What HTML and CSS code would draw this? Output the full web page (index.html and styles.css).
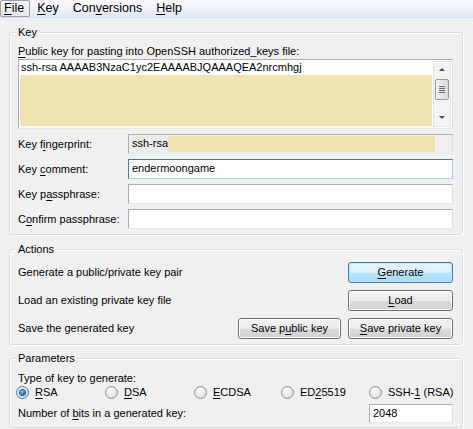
FILE: index.html
```html
<!DOCTYPE html>
<html lang="en">
<head>
    <meta charset="UTF-8">
    <title>PuTTY Key Generator</title>
    <link rel="stylesheet" href="styles.css">
</head>
<body>
    <div class="menubar">
        <span class="menu-item active"><u>F</u>ile</span>
        <span class="menu-item"><u>K</u>ey</span>
        <span class="menu-item">Con<u>v</u>ersions</span>
        <span class="menu-item"><u>H</u>elp</span>
    </div>

    <div class="content">
        <!-- Key -->
        <section class="group group-key">
            <span class="group-title">Key</span>
            <div class="field-label"><u>P</u>ublic key for pasting into OpenSSH authorized_keys file:</div>
            <div class="pubkey">
                <div class="pubkey-text">
                    <div class="pubkey-line">ssh-rsa AAAAB3NzaC1yc2EAAAABJQAAAQEA2nrcmhgj</div>
                    <div class="pubkey-fill"></div>
                </div>
                <div class="scrollbar">
                    <span class="arrow up"></span>
                    <span class="thumb"><i></i><i></i><i></i><i></i></span>
                    <span class="arrow down"></span>
                </div>
            </div>
            <div class="key-rows">
                <label>Key f<u>i</u>ngerprint:</label>
                <div class="input fingerprint"><span class="fp-text">ssh-rsa</span><span class="fp-fill"></span></div>
                <label>Key <u>c</u>omment:</label>
                <div class="input focused">endermoongame</div>
                <label>Key p<u>a</u>ssphrase:</label>
                <div class="input"></div>
                <label>C<u>o</u>nfirm passphrase:</label>
                <div class="input"></div>
            </div>
        </section>

        <!-- Actions -->
        <section class="group group-actions">
            <span class="group-title">Actions</span>
            <div class="action-row">
                <span class="action-text">Generate a public/private key pair</span>
                <button class="btn default"><u>G</u>enerate</button>
            </div>
            <div class="action-row">
                <span class="action-text">Load an existing private key file</span>
                <button class="btn"><u>L</u>oad</button>
            </div>
            <div class="action-row">
                <span class="action-text">Save the generated key</span>
                <button class="btn btn-narrow">Save p<u>u</u>blic key</button>
                <button class="btn"><u>S</u>ave private key</button>
            </div>
        </section>

        <!-- Parameters -->
        <section class="group group-params">
            <span class="group-title">Parameters</span>
            <div class="param-text">Type of key to generate:</div>
            <div class="radios">
                <span class="radio checked"><span class="dot"></span><span><u>R</u>SA</span></span>
                <span class="radio"><span class="dot"></span><span><u>D</u>SA</span></span>
                <span class="radio"><span class="dot"></span><span><u>E</u>CDSA</span></span>
                <span class="radio"><span class="dot"></span><span>ED<u>2</u>5519</span></span>
                <span class="radio"><span class="dot"></span><span>SSH-<u>1</u> (RSA)</span></span>
            </div>
            <div class="bits-row">
                <span>Number of <u>b</u>its in a generated key:</span>
                <div class="input bits">2048</div>
            </div>
        </section>
    </div>
</body>
</html>
```

FILE: styles.css
```css
body {
    margin: 0;
    background: #f0f0f0;
    font-family: 'Liberation Sans', Arial, sans-serif;
    font-size: 11px;
    line-height: 13px;
    color: #000;
}

u {
    text-decoration-thickness: 1px;
    text-underline-offset: 2px;
}

/* Menu bar */
.menubar {
    height: 17px;
    display: flex;
    align-items: stretch;
    background: linear-gradient(#fbfcfe, #eef2f9 55%, #dde6f3);
    border-bottom: 1px solid #d8e0ec;
    font-size: 12.5px;
    line-height: 15px;
}

.menu-item {
    padding: 0 6px;
    border: 1px solid transparent;
}

.menu-item.active {
    padding: 0 5px 0 3px;
    border-color: #9aa0a6;
    border-radius: 2px;
    background: linear-gradient(#f6f6f6, #e4e6e9);
}

.content {
    padding: 0 10px 0 9px;
}

/* Group boxes */
.group {
    position: relative;
    border: 1px solid #d5dfe5;
    border-radius: 3px;
    box-shadow: inset 1px 1px 0 #fff, 1px 1px 0 #fff;
    padding: 0 9px 0 8px;
}

.group-title {
    position: absolute;
    top: -7px;
    left: 6px;
    padding: 0 2px;
    background: #f0f0f0;
}

.group-key {
    margin-top: 14px;
    padding-top: 12px;
    padding-bottom: 5px;
}

.field-label {
    height: 13px;
    margin-bottom: 1px;
}

/* Public key box */
.pubkey {
    display: flex;
    height: 68px;
    border: 1px solid #abadb3;
    border-right-color: #dbdfe6;
    border-bottom-color: #e3e9ef;
    background: #fff;
}

.pubkey-text {
    flex: 1;
    display: flex;
    flex-direction: column;
    padding: 1px 1px 2px 1px;
}

.pubkey-line {
    height: 14px;
    padding-left: 1px;
    background: #fff;
}

.pubkey-fill {
    flex: 1;
    background: #efe4b0;
}

.scrollbar {
    width: 16px;
    margin: 1px 1px 1px 0;
    border: 1px solid #e4e4e4;
    background: #f4f4f4;
    display: flex;
    flex-direction: column;
    align-items: center;
}

.arrow {
    width: 0;
    height: 0;
    border-left: 3px solid transparent;
    border-right: 3px solid transparent;
}

.arrow.up {
    margin-top: 6px;
    border-bottom: 3px solid #4d4d4d;
}

.arrow.down {
    margin-top: auto;
    margin-bottom: 7px;
    border-top: 3px solid #4d4d4d;
}

.thumb {
    width: 12px;
    height: 19px;
    margin-top: 8px;
    border: 1px solid #979797;
    border-radius: 2px;
    background: linear-gradient(90deg, #f3f3f3, #e6e6e6 50%, #d9d9d9);
    display: flex;
    flex-direction: column;
    align-items: center;
    justify-content: center;
    gap: 1px;
}

.thumb i {
    width: 6px;
    height: 1px;
    background: #6e6e6e;
}

/* Key rows */
.key-rows {
    display: grid;
    grid-template-columns: 110px 325px;
    grid-auto-rows: 20px;
    row-gap: 5px;
    margin-top: 5px;
    align-items: center;
}

.input {
    box-sizing: border-box;
    height: 20px;
    border: 1px solid #abadb3;
    border-right-color: #dbdfe6;
    border-bottom-color: #e3e9ef;
    background: #fff;
    padding: 2px 3px;
    white-space: nowrap;
}

.input.focused {
    border-color: #3d7bad;
    border-right-color: #a4c9e3;
    border-bottom-color: #b5cfe7;
}

.fingerprint {
    display: flex;
    padding: 1px;
    background: #f0f0f0;
}

.fp-text {
    width: 36px;
    padding: 1px 0 0 2px;
    background: #ebebeb;
}

.fp-fill {
    width: 267px;
    background: #efe4b0;
}

/* Actions */
.group-actions {
    margin-top: 14px;
    padding-top: 12px;
    padding-bottom: 5px;
    display: flex;
    flex-direction: column;
    gap: 7px;
}

.action-row {
    display: flex;
    align-items: center;
    gap: 7px;
    height: 21px;
}

.action-text {
    flex: 1;
}

.btn {
    width: 105px;
    height: 21px;
    padding: 0;
    font: inherit;
    color: #000;
    border: 1px solid #707070;
    border-radius: 3px;
    background: linear-gradient(#f2f2f2, #ebebeb 50%, #dddddd 51%, #cfcfcf);
    box-shadow: inset 0 0 0 1px #fcfcfc;
}

.btn-narrow {
    width: 103px;
}

.btn.default {
    border-color: #3c7fb1;
    background: linear-gradient(#eaf6fd, #d9f0fc 50%, #bee6fd 51%, #a7d9f5);
    box-shadow: inset 0 0 0 1px #bfe6fb;
}

/* Parameters */
.group-params {
    margin-top: 13px;
    padding-top: 13px;
    padding-bottom: 4px;
}

.param-text {
    height: 13px;
}

.radios {
    display: grid;
    grid-template-columns: 89px 89px 87px 88px 1fr;
    height: 14px;
    margin-left: -2px;
    align-items: center;
    white-space: nowrap;
}

.radio {
    display: flex;
    align-items: center;
    gap: 6px;
}

.dot {
    width: 11px;
    height: 11px;
    flex-shrink: 0;
    border: 1px solid #8e8f8f;
    border-radius: 50%;
    background: radial-gradient(circle at 40% 35%, #ffffff, #e3e3e3 60%, #cfcfcf);
    display: flex;
    align-items: center;
    justify-content: center;
}

.radio.checked .dot {
    border-color: #3c7fb1;
}

.radio.checked .dot::after {
    content: "";
    width: 5px;
    height: 5px;
    border-radius: 50%;
    background: radial-gradient(circle at 40% 35%, #8fd0f6, #1e6fb1 60%, #0b3f73);
    box-shadow: 0 0 0 1px #245c8a;
}

.bits-row {
    display: flex;
    align-items: center;
    justify-content: space-between;
    margin-top: 5px;
}

.input.bits {
    width: 84px;
    height: 19px;
    padding: 2px 3px;
}
```
